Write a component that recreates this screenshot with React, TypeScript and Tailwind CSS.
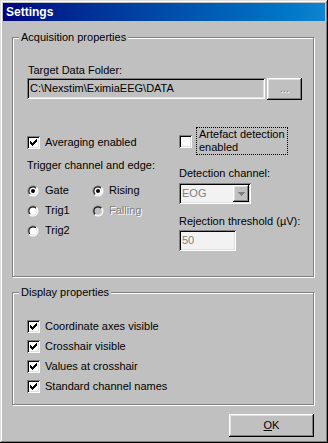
import React from "react";

const raised =
  "shadow-[inset_-1px_-1px_0_#000,inset_1px_1px_0_#fff,inset_-2px_-2px_0_#808080,inset_2px_2px_0_#dfdfdf]";
const sunken =
  "shadow-[inset_1px_1px_0_#808080,inset_-1px_-1px_0_#fff,inset_2px_2px_0_#000,inset_-2px_-2px_0_#dfdfdf]";

function Check({ checked }: { checked: boolean }) {
  return (
    <div className={`w-[13px] h-[13px] bg-white shrink-0 flex items-center justify-center ${sunken}`}>
      {checked && (
        <svg width="7" height="7" viewBox="0 0 7 7" shapeRendering="crispEdges">
          <path d="M0 2h1v1h1v1h1v-1h1v-1h1v-1h1v-1h1v3h-1v1h-1v1h-1v1h-1v1h-1v-1h-1v-1h-1z" fill="#000" />
        </svg>
      )}
    </div>
  );
}

function Radio({ checked, disabled, id }: { checked: boolean; disabled?: boolean; id: string }) {
  return (
    <svg width="12" height="12" viewBox="0 0 12 12" className="shrink-0">
      <defs>
        <linearGradient id={`o${id}`} x1="0" y1="0" x2="1" y2="1">
          <stop offset="0.5" stopColor="#808080" />
          <stop offset="0.5" stopColor="#ffffff" />
        </linearGradient>
        <linearGradient id={`i${id}`} x1="0" y1="0" x2="1" y2="1">
          <stop offset="0.5" stopColor="#000000" />
          <stop offset="0.5" stopColor="#dfdfdf" />
        </linearGradient>
      </defs>
      <circle cx="6" cy="6" r="5.5" fill={`url(#o${id})`} />
      <circle cx="6" cy="6" r="4.5" fill={`url(#i${id})`} />
      <circle cx="6" cy="6" r="3.6" fill={disabled ? "#c0c0c0" : "#fff"} />
      {checked && <circle cx="6" cy="6" r="2" fill="#000" />}
    </svg>
  );
}

export default function App() {
  return (
    <div
      className={`w-[328px] h-[443px] bg-[#c0c0c0] p-[3px] text-[11px] leading-[13px] text-black shadow-[inset_-1px_-1px_0_#000,inset_1px_1px_0_#dfdfdf,inset_-2px_-2px_0_#808080,inset_2px_2px_0_#fff]`}
      style={{ fontFamily: '"Liberation Sans", Arial, sans-serif' }}
    >
      <div className="h-[18px] bg-gradient-to-r from-[#000080] to-[#1084d0] flex items-center pl-[3px] text-white font-bold text-[12px]">
        Settings
      </div>

      <div className="pl-[9px] pt-[16px]">
        {/* Acquisition properties */}
        <div className="relative w-[302px] h-[240px] border border-[#808080] shadow-[inset_1px_1px_0_#fff,1px_1px_0_#fff]">
          <div className="absolute left-[6px] top-[-7px] bg-[#c0c0c0] px-[2px]">Acquisition properties</div>
          <div className="pl-[14px] pt-[26px]">
            <div className="pl-[1px]">Target Data Folder:</div>
            <div className="mt-[1px] flex gap-[2px]">
              <div className={`w-[238px] h-[21px] flex items-center pl-[3px] bg-[#c0c0c0] ${sunken}`}>
                C:\Nexstim\EximiaEEG\DATA
              </div>
              <div className={`w-[35px] h-[22px] flex items-center justify-center ${raised}`}>
                <span className="text-[#808080] [text-shadow:1px_1px_0_#fff] -mt-[2px]">...</span>
              </div>
            </div>

            <div className="flex mt-[27px]">
              {/* left column */}
              <div className="w-[152px] pt-[9px]">
                <div className="flex items-center h-[13px]">
                  <Check checked />
                  <span className="ml-[5px]">Averaging enabled</span>
                </div>
                <div className="mt-[10px]">Trigger channel and edge:</div>
                <div className="mt-[12px] flex">
                  <div className="w-[65px] flex flex-col gap-[7px]">
                    <div className="flex items-center h-[13px]">
                      <Radio id="g" checked />
                      <span className="ml-[6px]">Gate</span>
                    </div>
                    <div className="flex items-center h-[13px]">
                      <Radio id="t1" checked={false} />
                      <span className="ml-[6px]">Trig1</span>
                    </div>
                    <div className="flex items-center h-[13px]">
                      <Radio id="t2" checked={false} />
                      <span className="ml-[6px]">Trig2</span>
                    </div>
                  </div>
                  <div className="flex flex-col gap-[7px]">
                    <div className="flex items-center h-[13px]">
                      <Radio id="r" checked />
                      <span className="ml-[5px]">Rising</span>
                    </div>
                    <div className="flex items-center h-[13px]">
                      <Radio id="f" checked={false} disabled />
                      <span className="ml-[5px] text-[#808080] [text-shadow:1px_1px_0_#fff]">Falling</span>
                    </div>
                  </div>
                </div>
              </div>

              {/* right column */}
              <div className="flex flex-col">
                <div className="flex items-start">
                  <div className="mt-[8px]">
                    <Check checked={false} />
                  </div>
                  <div className="ml-[4px] w-[92px] h-[28px] border border-dotted border-black pl-[2px] leading-[13px]">
                    Artefact detection enabled
                  </div>
                </div>
                <div className="mt-[12px]">Detection channel:</div>
                <div className={`mt-[3px] w-[72px] h-[21px] flex items-center justify-between pl-[3px] pr-[2px] bg-[#f2f2f2] ${sunken}`}>
                  <span className="text-[#808080]">EOG</span>
                  <div className={`w-[16px] h-[17px] bg-[#c0c0c0] flex items-center justify-center ${raised}`}>
                    <svg width="7" height="4" viewBox="0 0 7 4" shapeRendering="crispEdges">
                      <path d="M0 0h7v1h-1v1h-1v1h-1v1h-1v-1h-1v-1h-1v-1h-1z" fill="#808080" />
                    </svg>
                  </div>
                </div>
                <div className="mt-[11px]">Rejection threshold (µV):</div>
                <div className={`mt-[2px] w-[57px] h-[21px] flex items-center pl-[3px] bg-[#f2f2f2] text-[#808080] ${sunken}`}>
                  50
                </div>
              </div>
            </div>
          </div>
        </div>

        {/* Display properties */}
        <div className="relative mt-[15px] w-[302px] h-[113px] border border-[#808080] shadow-[inset_1px_1px_0_#fff,1px_1px_0_#fff]">
          <div className="absolute left-[6px] top-[-7px] bg-[#c0c0c0] px-[2px]">Display properties</div>
          <div className="pl-[14px] pt-[27px] flex flex-col gap-[7px]">
            {["Coordinate axes visible", "Crosshair visible", "Values at crosshair", "Standard channel names"].map(
              (t) => (
                <div key={t} className="flex items-center h-[13px]">
                  <Check checked />
                  <span className="ml-[5px]">{t}</span>
                </div>
              )
            )}
          </div>
        </div>

        <div className="flex justify-end pr-[11px] mt-[9px]">
          <div className={`w-[85px] h-[23px] flex items-center justify-center ${raised}`}>
            <span>
              <span className="underline">O</span>K
            </span>
          </div>
        </div>
      </div>
    </div>
  );
}
